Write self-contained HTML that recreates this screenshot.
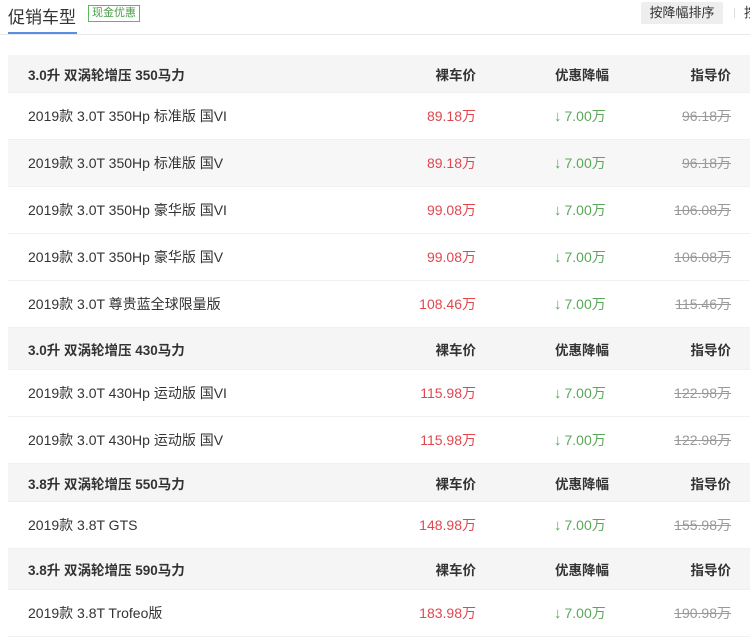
<!DOCTYPE html>
<html><head><meta charset="utf-8"><style>
*{margin:0;padding:0;box-sizing:border-box}
body{width:750px;height:639px;overflow:hidden;background:#fff;font-family:"Liberation Sans","Noto Sans CJK SC",sans-serif;font-size:14px;color:#333;position:relative}
.t{position:absolute;left:8px;top:3px;font-size:17px;color:#333}
.tag{position:absolute;left:88px;top:5px;border:1px solid #5cb85c;color:#4a9e4a;font-size:11px;padding:0 3px;line-height:15px}
.ul{position:absolute;left:8px;top:32px;width:69px;height:2px;background:#5b8ee0}
.ln{position:absolute;left:0;right:0;top:34px;height:1px;background:#e8e8e8}
.btn{position:absolute;left:641px;top:2px;width:82px;height:22px;background:#eee;border-radius:2px;text-align:center;line-height:22px;color:#333;font-size:13px}
.sep{position:absolute;left:734px;top:8px;width:1px;height:10px;background:#ddd}
.p{position:absolute;left:744px;top:2px;line-height:22px;font-size:13px}
.r{position:absolute;left:8px;right:0;border-bottom:1px solid #f0f0f0}
.r span{position:absolute;top:50%;transform:translateY(-50%);white-space:nowrap}
.h{background:#f5f5f5;font-weight:bold;font-size:13.5px}
.g{background:#f7f7f7}
.n{left:20px}
.a{right:274px;color:#e0474f}
.d{left:546px;color:#5aa85a}
.d b{font-weight:bold;font-size:15px;margin-right:3px}
.m{right:19px;color:#999;text-decoration:line-through}
.h .a,.h .d,.h .m{color:#333;text-decoration:none}
.h .d{left:547px}
</style></head><body>
<div class="t">促销车型</div><div class="tag">现金优惠</div>
<div class="ul"></div><div class="ln"></div>
<div class="btn">按降幅排序</div><div class="sep"></div><div class="p">按</div>

<div class="r h" style="top:55px;height:38px"><span class="n">3.0升 双涡轮增压 350马力</span><span class="a">裸车价</span><span class="d">优惠降幅</span><span class="m">指导价</span></div>
<div class="r" style="top:93px;height:47px"><span class="n">2019款 3.0T 350Hp 标准版 国VI</span><span class="a">89.18万</span><span class="d"><b>↓</b>7.00万</span><span class="m">96.18万</span></div>
<div class="r g" style="top:140px;height:47px"><span class="n">2019款 3.0T 350Hp 标准版 国V</span><span class="a">89.18万</span><span class="d"><b>↓</b>7.00万</span><span class="m">96.18万</span></div>
<div class="r" style="top:187px;height:47px"><span class="n">2019款 3.0T 350Hp 豪华版 国VI</span><span class="a">99.08万</span><span class="d"><b>↓</b>7.00万</span><span class="m">106.08万</span></div>
<div class="r" style="top:234px;height:47px"><span class="n">2019款 3.0T 350Hp 豪华版 国V</span><span class="a">99.08万</span><span class="d"><b>↓</b>7.00万</span><span class="m">106.08万</span></div>
<div class="r" style="top:281px;height:47px"><span class="n">2019款 3.0T 尊贵蓝全球限量版</span><span class="a">108.46万</span><span class="d"><b>↓</b>7.00万</span><span class="m">115.46万</span></div>

<div class="r h" style="top:328px;height:42px"><span class="n">3.0升 双涡轮增压 430马力</span><span class="a">裸车价</span><span class="d">优惠降幅</span><span class="m">指导价</span></div>
<div class="r" style="top:370px;height:47px"><span class="n">2019款 3.0T 430Hp 运动版 国VI</span><span class="a">115.98万</span><span class="d"><b>↓</b>7.00万</span><span class="m">122.98万</span></div>
<div class="r" style="top:417px;height:47px"><span class="n">2019款 3.0T 430Hp 运动版 国V</span><span class="a">115.98万</span><span class="d"><b>↓</b>7.00万</span><span class="m">122.98万</span></div>

<div class="r h" style="top:464px;height:38px"><span class="n">3.8升 双涡轮增压 550马力</span><span class="a">裸车价</span><span class="d">优惠降幅</span><span class="m">指导价</span></div>
<div class="r" style="top:502px;height:47px"><span class="n">2019款 3.8T GTS</span><span class="a">148.98万</span><span class="d"><b>↓</b>7.00万</span><span class="m">155.98万</span></div>

<div class="r h" style="top:549px;height:41px"><span class="n">3.8升 双涡轮增压 590马力</span><span class="a">裸车价</span><span class="d">优惠降幅</span><span class="m">指导价</span></div>
<div class="r" style="top:590px;height:47px"><span class="n">2019款 3.8T Trofeo版</span><span class="a">183.98万</span><span class="d"><b>↓</b>7.00万</span><span class="m">190.98万</span></div>
</body></html>
